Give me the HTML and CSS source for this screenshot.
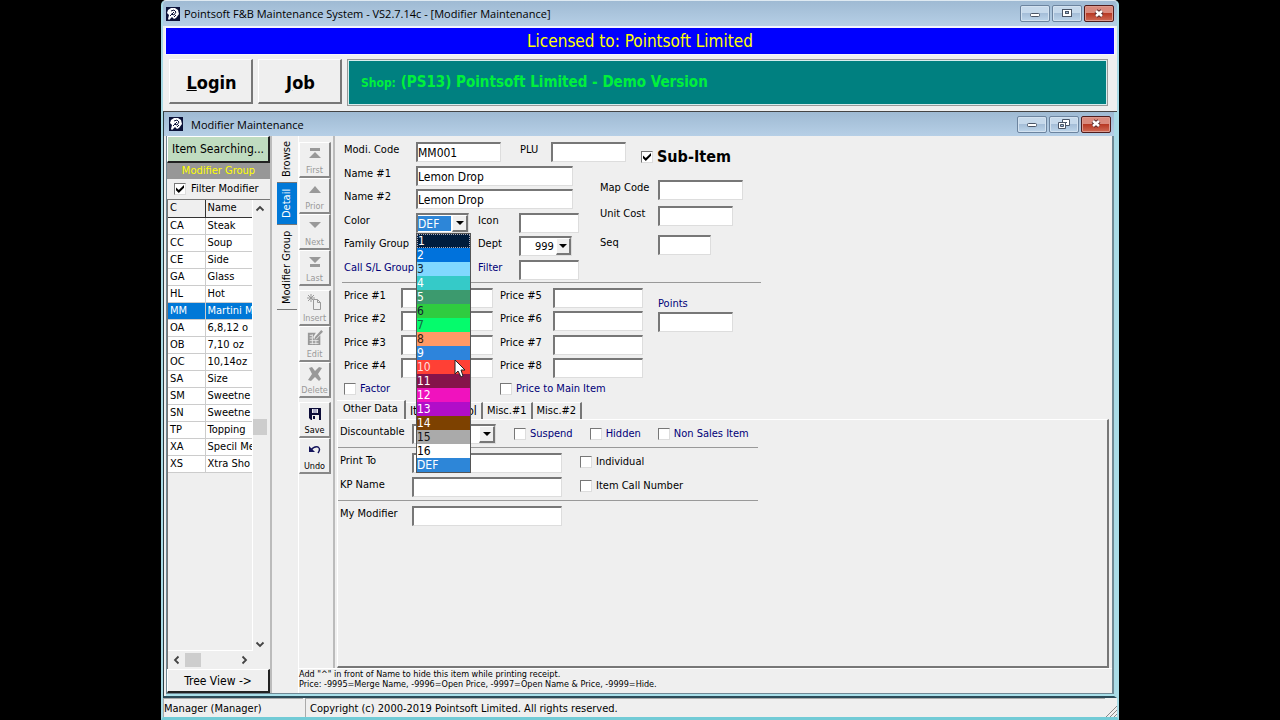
FILE: index.html
```html
<!DOCTYPE html>
<html lang="en">
<head>
  <meta charset="utf-8">
  <title>Pointsoft F&amp;B Maintenance System</title>
  <link rel="stylesheet" href="styles.css">
</head>
<body>
  <!-- icons used more than once -->
  <svg class="defs" width="0" height="0">
    <symbol id="logo" viewBox="0 0 14 14">
      <rect width="14" height="14" fill="#0b1238"/>
      <path d="M5 1h4l3 2 1 4-3 4-2 1-2-2-3 3-1-1 1-4-2-2 1-3z" fill="#fff"/>
      <path d="M5 4l3-1 2 2-2 3-3-1M4 9l4-4M10 8l-2 2" stroke="#0b1238" fill="none"/>
    </symbol>
    <symbol id="min" viewBox="0 0 14 12">
      <rect x="2.500" y="5.500" width="9" height="3" rx="1" fill="#fff" stroke="#4a5566"/>
    </symbol>
    <symbol id="max" viewBox="0 0 14 12">
      <rect x="2.500" y="1.500" width="9" height="7" fill="#fff" stroke="#4a5566"/>
      <rect x="5.500" y="3.500" width="3" height="2" fill="#9db7d3" stroke="#4a5566"/>
    </symbol>
    <symbol id="restore" viewBox="0 0 14 12">
      <path d="M5.500 1.500h7v6h-7z" fill="#fff" stroke="#4a5566"/>
      <path d="M8 4h2v1H8z" fill="#4a5566"/>
      <path d="M1.500 4.500h7v6h-7z" fill="#fff" stroke="#4a5566"/>
      <path d="M3.500 6.500h3v2h-3z" fill="#9db7d3" stroke="#4a5566"/>
    </symbol>
    <symbol id="close" viewBox="0 0 14 12">
      <path d="M4 3l6 5M10 3L4 8" stroke="#5b2a2a" stroke-width="4.500"/>
      <path d="M4 3l6 5M10 3L4 8" stroke="#fff" stroke-width="2.500"/>
    </symbol>
    <symbol id="chev" viewBox="0 0 10 10">
      <path d="M1.500 6.500L5 3l3.500 3.500" fill="none" stroke="#444" stroke-width="1.800"/>
    </symbol>
  </svg>

  <div class="app">
    <header class="titlebar">
      <svg class="logo"><use href="#logo"/></svg>
      <h1>Pointsoft F&amp;B Maintenance System - VS2.7.14c - [Modifier Maintenance]</h1>
      <div class="win-btns">
        <button aria-label="Minimize"><svg><use href="#min"/></svg></button>
        <button aria-label="Maximize"><svg><use href="#max"/></svg></button>
        <button class="close" aria-label="Close"><svg><use href="#close"/></svg></button>
      </div>
    </header>

    <div class="licence">Licensed to: Pointsoft Limited</div>

    <div class="topbar">
      <button class="big-btn"><u>L</u>ogin</button>
      <button class="big-btn"><u>J</u>ob</button>
      <div class="shop"><small>Shop:</small> (PS13) Pointsoft Limited - Demo Version</div>
    </div>

    <main class="mdi">
      <header class="titlebar mdi-title">
        <svg class="logo"><use href="#logo"/></svg>
        <h2>Modifier Maintenance</h2>
        <div class="win-btns">
          <button aria-label="Minimize"><svg><use href="#min"/></svg></button>
          <button aria-label="Restore"><svg><use href="#restore"/></svg></button>
          <button class="close" aria-label="Close"><svg><use href="#close"/></svg></button>
        </div>
      </header>

      <div class="mdi-body">
        <aside class="sidebar">
          <button class="side-btn search">Item Searching...</button>
          <div class="group-title">Modifier Group</div>
          <label class="check filter"><input type="checkbox" checked> Filter Modifier</label>
          <div class="list">
            <div class="list-view">
              <table>
                <thead><tr><th>C</th><th>Name</th></tr></thead>
                <tbody>
                  <tr><td>CA</td><td>Steak</td></tr>
                  <tr><td>CC</td><td>Soup</td></tr>
                  <tr><td>CE</td><td>Side</td></tr>
                  <tr><td>GA</td><td>Glass</td></tr>
                  <tr><td>HL</td><td>Hot</td></tr>
                  <tr class="sel"><td>MM</td><td>Martini M</td></tr>
                  <tr><td>OA</td><td>6,8,12 o</td></tr>
                  <tr><td>OB</td><td>7,10 oz</td></tr>
                  <tr><td>OC</td><td>10,14oz</td></tr>
                  <tr><td>SA</td><td>Size</td></tr>
                  <tr><td>SM</td><td>Sweetne</td></tr>
                  <tr><td>SN</td><td>Sweetne</td></tr>
                  <tr><td>TP</td><td>Topping</td></tr>
                  <tr><td>XA</td><td>Specil Me</td></tr>
                  <tr><td>XS</td><td>Xtra Sho</td></tr>
                </tbody>
              </table>
            </div>
            <div class="vscroll">
              <svg class="chev"><use href="#chev"/></svg>
              <span class="thumb"></span>
              <svg class="chev down"><use href="#chev"/></svg>
            </div>
            <div class="hscroll">
              <svg class="chev left"><use href="#chev"/></svg>
              <span class="thumb"></span>
              <svg class="chev right"><use href="#chev"/></svg>
            </div>
          </div>
          <button class="side-btn">Tree View -&gt;</button>
        </aside>

        <nav class="vtabs">
          <button>Browse</button>
          <button class="active">Detail</button>
          <button>Modifier Group</button>
        </nav>

        <div class="work">
          <div class="work-row">
            <div class="tools">
              <button disabled><svg viewBox="0 0 16 16"><path d="M3 2h10v3H3zM8 6l6 6H2z"/></svg>First</button>
              <button disabled><svg viewBox="0 0 16 16"><path d="M8 4l6 7H2z"/></svg>Prior</button>
              <button disabled><svg viewBox="0 0 16 16"><path d="M2 4h12l-6 6z"/></svg>Next</button>
              <button disabled><svg viewBox="0 0 16 16"><path d="M2 3h12L8 9zM3 10h10v3H3z"/></svg>Last</button>
              <button disabled class="gap"><svg viewBox="0 0 16 16"><path d="M6.500 5.500h4l3 3v7h-7zM10.500 5.500v3h3M4 0v8M0 4h8M1 1l6 6M7 1L1 7" fill="none" stroke="#999"/></svg>Insert</button>
              <button disabled><svg viewBox="0 0 18 18"><path d="M1 3h9L7 8l1 3 3-1 4-4v11H1zM16 0l2 2-8 8-2 1 1-3z"/><path d="M3 6h3M3 9h3M3 12h10M3 15h10M6 5v11M10 11v5" stroke="#efefef"/></svg>Edit</button>
              <button disabled><svg viewBox="0 0 16 16"><path d="M2 2l3-1 3 4 4-4 3 1-4 6 3 5-2 2-4-4-4 4-3-1 4-6z"/></svg>Delete</button>
              <button class="gap"><svg viewBox="0 0 16 16"><path d="M2 2h12v12H4l-2-2z" fill="#0c0c38"/><path d="M5 3h6v4H5zM5 9h7v5H5z" fill="#efefef"/><path d="M6 4h4M6 6h4" stroke="#77a"/><path d="M6 10h2v3H6z" fill="#0c0c38"/></svg>Save</button>
              <button><svg viewBox="0 0 16 16"><path d="M2 4v6h6z" fill="#15155c"/><path d="M4 8q3-4 7-3 3 2 0 6" fill="none" stroke="#15155c" stroke-width="1.500"/></svg>Undo</button>
            </div>

            <form class="form">
              <section class="head">
                <div class="row">
                  <label class="lbl" for="code">Modi. Code</label>
                  <input id="code" class="w-code" type="text" value="MM001">
                  <label class="lbl-plu" for="plu">PLU</label>
                  <input id="plu" class="w-75" type="text">
                  <label class="check sub-item"><input type="checkbox" checked> Sub-Item</label>
                </div>
                <div class="head-cols">
                  <div class="head-left">
                    <div class="row">
                      <label class="lbl" for="name1">Name #1</label>
                      <input id="name1" class="w-name" type="text" value="Lemon Drop">
                    </div>
                    <div class="row">
                      <label class="lbl" for="name2">Name #2</label>
                      <input id="name2" class="w-name" type="text" value="Lemon Drop">
                    </div>
                    <div class="row">
                      <label class="lbl" for="color">Color</label>
                      <div class="combo color-combo">
                        <select id="color"><option>DEF</option></select>
                        <span class="arrow"></span>
                        <ul class="colors" role="listbox" aria-label="Color">
                          <li class="c1">1</li>
                          <li class="c2">2</li>
                          <li class="c3">3</li>
                          <li class="c4">4</li>
                          <li class="c5">5</li>
                          <li class="c6">6</li>
                          <li class="c7">7</li>
                          <li class="c8">8</li>
                          <li class="c9">9</li>
                          <li class="c10">10</li>
                          <li class="c11">11</li>
                          <li class="c12">12</li>
                          <li class="c13">13</li>
                          <li class="c14">14</li>
                          <li class="c15">15</li>
                          <li class="c16">16</li>
                          <li class="def">DEF</li>
                        </ul>
                        <svg class="cursor" viewBox="0 0 12 19"><path d="M1 1v14l3-3 3 6 2-1-2-6h4z" fill="#fff" stroke="#222"/></svg>
                      </div>
                      <label class="lbl-mid" for="icon">Icon</label>
                      <input id="icon" class="w-60" type="text">
                    </div>
                    <div class="row">
                      <label class="lbl" for="family">Family Group</label>
                      <input id="family" class="w-53" type="text">
                      <label class="lbl-mid" for="dept">Dept</label>
                      <div class="combo dept">
                        <select id="dept"><option>999</option></select>
                        <span class="arrow"></span>
                      </div>
                    </div>
                    <div class="row">
                      <label class="lbl navy" for="call">Call S/L Group</label>
                      <input id="call" class="w-53" type="text">
                      <label class="lbl-mid navy" for="filter">Filter</label>
                      <input id="filter" class="w-60" type="text">
                    </div>
                  </div>
                  <div class="head-right">
                    <label for="map">Map Code</label>
                    <input id="map" class="w-code" type="text">
                    <label for="cost">Unit Cost</label>
                    <input id="cost" class="w-75" type="text">
                    <label for="seq">Seq</label>
                    <input id="seq" class="w-53" type="text">
                  </div>
                </div>
              </section>

              <section class="prices">
                <div class="price-grid">
                  <label for="p1">Price #1</label><input id="p1" type="text">
                  <label for="p5">Price #5</label><input id="p5" type="text">
                  <label for="p2">Price #2</label><input id="p2" type="text">
                  <label for="p6">Price #6</label><input id="p6" type="text">
                  <label for="p3">Price #3</label><input id="p3" type="text">
                  <label for="p7">Price #7</label><input id="p7" type="text">
                  <label for="p4">Price #4</label><input id="p4" type="text">
                  <label for="p8">Price #8</label><input id="p8" type="text">
                  <label class="check navy span2"><input type="checkbox"> Factor</label>
                  <label class="check navy span2 main-item"><input type="checkbox"> Price to Main Item</label>
                </div>
                <div class="points">
                  <label class="navy" for="points">Points</label>
                  <input id="points" class="w-75" type="text">
                </div>
              </section>

              <div class="tabs">
                <button type="button" class="active">Other Data</button>
                <button type="button" class="item-control">Item Control</button>
                <button type="button">Misc.#1</button>
                <button type="button">Misc.#2</button>
              </div>

              <section class="tab-panel">
                <div class="block row">
                  <label class="lbl" for="disc">Discountable</label>
                  <div class="combo disc">
                    <select id="disc"><option></option></select>
                    <span class="arrow"></span>
                  </div>
                  <div class="flags">
                    <label class="check navy"><input type="checkbox"> Suspend</label>
                    <label class="check navy"><input type="checkbox"> Hidden</label>
                    <label class="check navy"><input type="checkbox"> Non Sales Item</label>
                  </div>
                </div>
                <div class="block">
                  <div class="row">
                    <label class="lbl" for="print">Print To</label>
                    <input id="print" class="w-150" type="text">
                    <label class="check call"><input type="checkbox"> Individual</label>
                  </div>
                  <div class="row">
                    <label class="lbl" for="kp">KP Name</label>
                    <input id="kp" class="w-150" type="text">
                    <label class="check call"><input type="checkbox"> Item Call Number</label>
                  </div>
                </div>
                <div class="block row last">
                  <label class="lbl" for="mymod">My Modifier</label>
                  <input id="mymod" class="w-150" type="text">
                </div>
              </section>
            </form>
          </div>
          <p class="notes">Add "^" in front of Name to hide this item while printing receipt.<br>Price: -9995=Merge Name, -9996=Open Price, -9997=Open Name &amp; Price, -9999=Hide.</p>
        </div>
      </div>
    </main>

    <footer class="status">
      <span class="user">Manager (Manager)</span>
      <span class="copy">Copyright (c) 2000-2019 Pointsoft Limited. All rights reserved.</span>
      <svg class="grip" viewBox="0 0 12 12"><path d="M1 12L12 1M5 12l7-7M9 12l3-3" stroke="#888"/></svg>
    </footer>
  </div>
</body>
</html>
```

FILE: styles.css
```css
* { margin: 0; padding: 0; box-sizing: border-box; }
body {
  background: #000;
  padding: 0 161px;
  font-family: "DejaVu Sans Condensed", "DejaVu Sans", sans-serif;
  font-size: 12px;
  line-height: 16px;
  color: #000;
}
.defs { display: block; }
button, input, select { font: inherit; color: inherit; border-radius: 0; }
ul { list-style: none; }
label { font-size: 11px; white-space: nowrap; }
.navy { color: #000078; }

.app {
  display: flex;
  flex-direction: column;
  height: 100vh;
  background: #efefef;
  border: 2px solid #a9dbe6;
  border-top: 1px solid #dfeaf2;
  border-bottom: 3px solid #72cbd6;
  border-radius: 5px 5px 0 0;
  overflow: hidden;
}

/* title bars */
.titlebar {
  display: flex;
  align-items: center;
  flex: none;
  height: 25px;
  padding: 0 3px;
  background: linear-gradient(#9fbad3, #b6cfe6);
}
.titlebar h1, .titlebar h2 {
  flex: 1;
  margin-left: 4px;
  font: 11px "Open Sans", "Noto Sans", sans-serif;
}
.logo { width: 14px; height: 14px; }
.win-btns { display: flex; gap: 2px; }
.win-btns button {
  display: flex;
  align-items: center;
  justify-content: center;
  width: 30px;
  height: 17px;
  border: 1px solid #6c849f;
  border-radius: 2px;
  background: linear-gradient(#c6d9eb 50%, #a5bed8 50%, #bdd5ea);
  box-shadow: inset 0 0 0 1px #d3e2f0;
}
.win-btns svg { width: 14px; height: 12px; }
.win-btns .close {
  border-color: #4f1c1c;
  background: linear-gradient(#d98a7d 50%, #b83a25 50%, #cf6a55);
  box-shadow: inset 0 0 0 1px #dd9a8e;
}
.licence {
  flex: none;
  height: 29px;
  margin: 0 2px;
  border: 1px solid #f4f4ff;
  border-width: 2px 1px 1px;
  background: #00f;
  color: #ff0;
  font-size: 17px;
  line-height: 26px;
  text-align: center;
}

/* login bar */
.topbar {
  display: flex;
  gap: 5px;
  flex: none;
  padding: 4px 9px 5px 6px;
  border-bottom: 1px solid #444;
}
.big-btn {
  width: 84px;
  height: 45px;
  padding: 3px 0 0 2px;
  border: 1px solid #fff;
  border-right: 2px solid #777;
  border-bottom: 2px solid #777;
  background: #efefef;
  font-size: 18px;
  font-weight: bold;
}
.shop {
  flex: 1;
  padding-left: 13px;
  border: 1px solid #999;
  box-shadow: inset 0 0 0 1px #d7eded;
  background: #008080;
  color: #00f03c;
  font-size: 15px;
  font-weight: bold;
  line-height: 44px;
}
.shop small { font-size: 12px; }

/* child window */
.mdi {
  display: flex;
  flex-direction: column;
  flex: 1;
  min-height: 0;
  border-right: 3px solid #a9dbe6;
  border-bottom: 2px solid #2b4b58;
  border-left: 1px solid #2b3b40;
}
.mdi-title { height: 24px; padding: 0 3px 0 5px; }
.mdi-title h2 { margin-left: 8px; }
.mdi-body {
  display: flex;
  flex: 1;
  min-height: 0;
  margin: 0 0 2px 2px;
  border: 1px solid #6f8894;
  border-width: 0 2px 1px 1px;
  box-shadow: 0 2px #a9e0ea;
}

/* group list */
.sidebar {
  display: flex;
  flex-direction: column;
  width: 103px;
}
.side-btn {
  height: 24px;
  border: 1px solid #fff;
  border-right: 2px solid #222;
  border-bottom: 2px solid #222;
  background: #efefef;
}
.search { height: 27px; background: #c0dcc0; }
.group-title {
  height: 16px;
  background: #979797;
  color: #ff0;
  font-size: 11px;
  text-align: center;
}
.check { display: flex; align-items: center; gap: 4px; }
.check input {
  appearance: none;
  width: 12px;
  height: 12px;
  flex: none;
  border: 1px solid #777;
  border-right-color: #ddd;
  border-bottom-color: #ddd;
  background: #fff;
}
.check input:checked::before {
  content: "";
  display: block;
  width: 8px;
  height: 8px;
  margin: 1px;
  background: #000;
  clip-path: polygon(0 30%, 35% 62%, 100% 0, 100% 35%, 35% 100%, 0 65%);
}
.filter { height: 20px; padding-left: 7px; gap: 5px; }
.list {
  display: grid;
  grid-template: minmax(0, 1fr) 18px / minmax(0, 1fr) 17px;
  flex: 1;
  min-height: 0;
  border: 1px solid #777;
  border-width: 1px 0 0 1px;
}
.list-view {
  overflow: hidden;
  border-right: 1px solid #fff;
  border-bottom: 1px solid #fff;
}
.list table {
  width: 100%;
  table-layout: fixed;
  border-collapse: collapse;
  background: #fff;
}
.list th, .list td {
  height: 17px;
  padding-left: 2px;
  border-right: 1px solid #ccc;
  border-bottom: 1px solid #ccc;
  font-size: 11px;
  font-weight: normal;
  line-height: 16px;
  text-align: left;
  white-space: nowrap;
  overflow: hidden;
}
.list th { background: #efefef; border-color: #333; }
.list th:first-child { width: 37px; }
.list th:last-child, .list td:last-child { border-right: 0; }
.list .sel td { background: #0078d7; color: #fff; }
.vscroll, .hscroll { display: flex; align-items: center; justify-content: space-between; }
.vscroll { flex-direction: column; padding: 4px 3px 2px 0; }
.hscroll { padding: 0 3px 0 4px; justify-content: flex-start; }
.thumb { background: #cdcdcd; }
.vscroll .thumb { width: 14px; height: 16px; }
.hscroll .thumb { width: 16px; height: 14px; margin: 0 38px 0 3px; flex: none; }
.chev { width: 10px; height: 10px; flex: none; }
.chev.down { transform: rotate(180deg); }
.chev.left { transform: rotate(-90deg); }
.chev.right { transform: rotate(90deg); }

/* vertical page tabs */
.vtabs {
  display: flex;
  flex-direction: column;
  width: 29px;
  padding-left: 5px;
  border-left: 2px solid #bbb;
  border-right: 1px solid #fff;
}
.vtabs button {
  width: 20px;
  height: 47px;
  border: 0;
  border-top: 1px solid #777;
  background: #efefef;
  font-size: 11px;
  writing-mode: vertical-rl;
  transform: rotate(180deg);
}
.vtabs button:last-child { height: 85px; }
.vtabs .active { height: 42px; background: #0078d7; color: #fff; }

.work {
  display: flex;
  flex-direction: column;
  flex: 1;
  min-width: 0;
}
.work-row { display: flex; flex: 1; min-height: 0; }
.tools {
  display: flex;
  flex-direction: column;
  width: 36px;
  padding-top: 6px;
  border-right: 2px solid #bbb;
}
.tools button {
  display: flex;
  flex-direction: column;
  align-items: center;
  justify-content: flex-end;
  gap: 2px;
  width: 32px;
  height: 36px;
  border: 1px solid #fff;
  border-right: 2px solid #888;
  border-bottom: 2px solid #888;
  background: #efefef;
  font-size: 9px;
  line-height: 12px;
}
.tools svg { width: 16px; height: 16px; fill: #999; }
.tools button:disabled { color: #999; }
.tools .gap { margin-top: 4px; }

/* form */
.form {
  display: flex;
  flex-direction: column;
  flex: 1;
  min-width: 0;
  padding: 6px 3px 0 2px;
}
.form input[type=text], .combo {
  height: 20px;
  border: 2px solid #777;
  border-right: 1px solid #ddd;
  border-bottom: 1px solid #ddd;
  background: #fff;
}
.form input[type=text] { padding: 1px 0 0; }
.form .w-code { width: 85px; }
.form .w-name { width: 157px; }
.form .w-75 { width: 75px; }
.form .w-60 { width: 60px; }
.form .w-53 { width: 53px; }
.form .w-150 { width: 150px; }
.row { display: flex; align-items: flex-start; }
.lbl { flex: none; width: 72px; }
.head {
  align-self: flex-start;
  width: 419px;
  margin-left: 5px;
  padding-left: 2px;
  border-bottom: 1px solid #999;
}
.head > .row { height: 24px; }
.lbl-plu { width: 50px; padding-left: 19px; }
.sub-item {
  margin: 5px 0 0 15px;
  font-size: 16px;
  font-weight: bold;
  line-height: 20px;
}
.head-cols { display: flex; }
.head-left {
  display: grid;
  grid-template-rows: 23px 24px 23px 24px 22px;
  width: 256px;
}
.lbl-mid { width: 50px; padding-left: 9px; }
.head-right {
  display: grid;
  grid-template: 26px 29px 20px / 58px auto;
  align-content: start;
  padding-top: 14px;
}

.combo { display: flex; }
.combo select {
  appearance: none;
  flex: 1;
  min-width: 0;
  border: 0;
  background: #fff;
  line-height: 16px;
}
.arrow {
  display: flex;
  align-items: center;
  justify-content: center;
  width: 16px;
  border: 1px solid #fff;
  border-right: 2px solid #777;
  border-bottom: 2px solid #777;
  background: #efefef;
  pointer-events: none;
}
.arrow::after {
  content: "";
  border: 4px solid transparent;
  border-top-color: #000;
  border-bottom: 0;
}
.color-combo { position: relative; width: 53px; }
.color-combo select { margin: 1px 1px 1px 0; background: #2d86d8; color: #fff; }
.dept { width: 53px; }
.dept select { padding-left: 14px; font-size: 11px; }
.dept .arrow { width: 15px; }
.disc { width: 84px; }

/* open colour list */
.colors {
  position: absolute;
  top: 18px;
  left: -2px;
  z-index: 2;
  width: 55px;
  border: 1px solid #555;
}
.colors li { height: 14px; line-height: 14px; color: #fff; }
.colors .c1 { background: #001c3c; border: 1px dotted #aab; line-height: 12px; }
.colors .c2 { background: #0072dc; }
.colors .c3 { background: #80d8ff; color: #123; }
.colors .c4 { background: #35cac8; }
.colors .c5 { background: #3c9a6e; }
.colors .c6 { background: #2fcc40; color: #123; }
.colors .c7 { background: #05fb6c; color: #164; }
.colors .c8 { background: #ff9966; color: #321; }
.colors .c9 { background: #2d84dc; }
.colors .c10 { background: #ff4035; color: #fdd; }
.colors .c11 { background: #85144b; }
.colors .c12 { background: #f012be; }
.colors .c13 { background: #b10dc9; }
.colors .c14 { background: #7d4100; }
.colors .c15 { background: #aaa; color: #111; }
.colors .c16 { background: #fff; color: #000; }
.colors .def { background: #2d86d8; }
.cursor {
  position: absolute;
  top: 144px;
  left: 36px;
  z-index: 3;
  width: 12px;
  height: 19px;
}

.prices { display: flex; margin-left: 7px; padding-top: 5px; }
.price-grid {
  display: grid;
  grid-template-columns: 57px 92px 60px 90px;
  grid-template-rows: 23px 24px 23px 22px 18px;
}
.price-grid label:nth-of-type(even) { padding-left: 7px; }
.span2 { grid-column: span 2; }
.price-grid .main-item { padding-left: 8px; }
.points { display: flex; flex-direction: column; padding: 8px 0 0 15px; }

.tabs { display: flex; align-items: flex-end; margin-top: 2px; height: 19px; }
.tabs button {
  height: 17px;
  padding: 0 4px;
  border: 0;
  border-top: 1px solid #fff;
  border-right: 2px solid #777;
  background: #efefef;
  font-size: 11px;
  white-space: nowrap;
}
.tabs .active { height: 19px; padding: 0 6px 2px; }
.tabs .item-control { width: 77px; font-size: 12px; }
.tab-panel {
  flex: 1;
  border: 1px solid #fff;
  border-right: 2px solid #777;
  border-bottom: 2px solid #777;
  padding: 4px 0 0;
}
.block {
  width: 420px;
  padding: 0 0 3px 2px;
  margin-bottom: 5px;
  border-bottom: 1px solid #999;
}
.block .row + .row { margin-top: 4px; }
.block.last { border: 0; }
.flags { display: flex; gap: 17px; margin: 2px 0 0 18px; }
.call { margin: 1px 0 0 18px; }
.notes {
  height: 25px;
  border-top: 1px solid #fff;
  font-size: 9px;
  line-height: 10px;
  white-space: nowrap;
}

.status { display: flex; flex: none; height: 19px; line-height: 20px; font-size: 11px; }
.status span { border-top: 1px solid #aaa; border-left: 1px solid #aaa; }
.user { width: 140px; }
.copy { flex: 1; margin-left: 2px; padding-left: 4px; }
.grip { align-self: flex-end; width: 12px; height: 12px; }
```
